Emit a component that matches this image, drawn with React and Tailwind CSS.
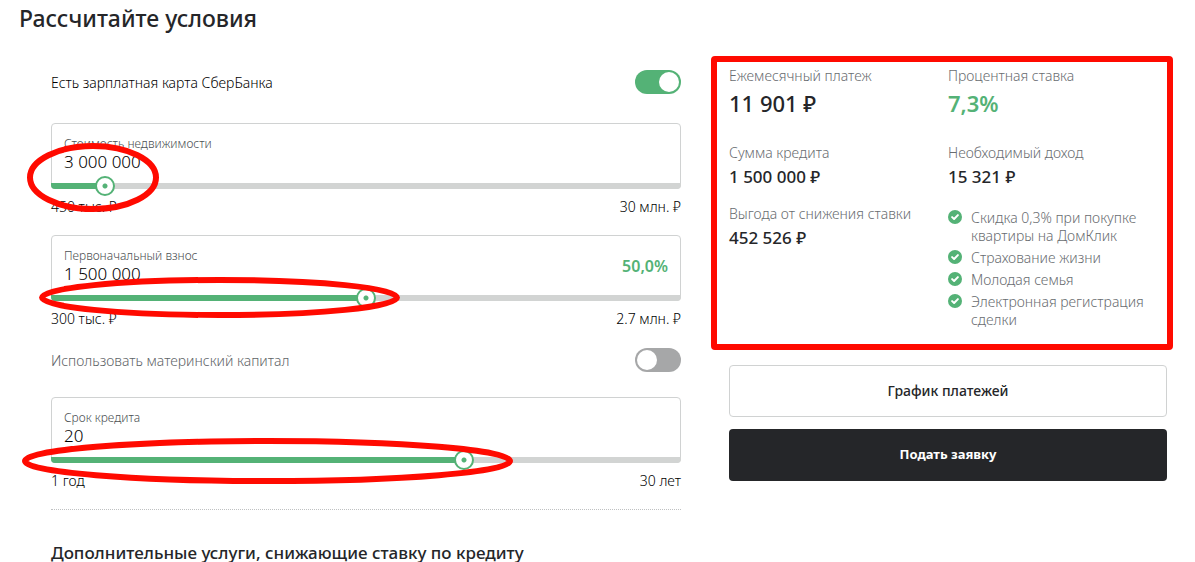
import React, { useState } from 'react';

const Switch = ({ id, label, defaultChecked, muted }) => (
    <div className="flex h-6 items-center justify-between">
        <label htmlFor={id} className={muted ? 'pt-0.5 text-sm font-light text-[#606467]' : 'pt-0.5 text-sm font-light text-black'}>
            {label}
        </label>
        <input
            id={id}
            type="checkbox"
            role="switch"
            defaultChecked={defaultChecked}
            className="h-6 w-[46px] shrink-0 cursor-pointer appearance-none rounded-full bg-[#a6a7a8] p-0.5 before:block before:size-5 before:rounded-full before:bg-white checked:bg-[#54b276] checked:before:ml-auto"
        />
    </div>
);

// Hand-drawn style red marker around a slider
const Marker = ({ className, width, height }) => (
    <svg
        className={`pointer-events-none absolute z-10 ${className}`}
        width={width}
        height={height}
        fill="none"
        aria-hidden="true"
    >
        <ellipse
            cx={width / 2}
            cy={height / 2}
            rx={width / 2 - 3}
            ry={height / 2 - 3}
            stroke="#ff0a00"
            strokeWidth="6"
        />
    </svg>
);

const RangeField = ({ id, label, display, min, max, step, initial, minLabel, maxLabel, percent, children }) => {
    const [value, setValue] = useState(initial);
    const [text, setText] = useState(display);
    const fill = ((value - min) / (max - min)) * 100;

    const handleSlide = (e) => {
        const next = Number(e.target.value);
        setValue(next);
        setText(next.toLocaleString('ru-RU'));
    };

    return (
        <div className="relative">
            <div className="relative h-[66px] rounded border border-[#d0d2d2]">
                <div className="flex items-center justify-between px-3 pt-3">
                    <div className="min-w-0 flex-1">
                        <label htmlFor={id} className="block text-xs leading-4 font-light text-[#4b4f52]">
                            {label}
                        </label>
                        <input
                            id={id}
                            type="text"
                            value={text}
                            onChange={(e) => setText(e.target.value)}
                            className="block h-5 w-full bg-transparent text-[17px] leading-5 font-light text-black outline-none"
                        />
                    </div>
                    {percent && <span className="text-base font-semibold text-[#54b276]">{percent}</span>}
                </div>
                <div className="absolute -inset-x-px -bottom-px h-1.5 overflow-hidden rounded-b bg-[#d2d4d3]">
                    <div className="h-full bg-[#54b276]" style={{ width: `${fill}%` }} />
                </div>
                <input
                    type="range"
                    aria-label={label}
                    min={min}
                    max={max}
                    step={step}
                    value={value}
                    onChange={handleSlide}
                    className="absolute -inset-x-[11px] -bottom-2 h-5 w-[calc(100%+22px)] cursor-pointer appearance-none bg-transparent [&::-webkit-slider-thumb]:size-5 [&::-webkit-slider-thumb]:appearance-none [&::-webkit-slider-thumb]:rounded-full [&::-webkit-slider-thumb]:border-2 [&::-webkit-slider-thumb]:border-[#54b276] [&::-webkit-slider-thumb]:bg-[radial-gradient(circle,#54b276_2px,#ffffff_3px)]"
                />
            </div>
            <div className="mt-2 flex h-5 items-center justify-between text-sm font-light text-black">
                <span>{minLabel}</span>
                <span>{maxLabel}</span>
            </div>
            {children}
        </div>
    );
};

const Stat = ({ label, value }) => (
    <div>
        <dt className="text-sm leading-5 font-light text-[#686c70]">{label}</dt>
        <dd className="mt-0.5 text-[17px] leading-6 font-medium">{value}</dd>
    </div>
);

const discounts = [
    'Скидка 0,3% при покупке квартиры на ДомКлик',
    'Страхование жизни',
    'Молодая семья',
    'Электронная регистрация сделки',
];

const CheckIcon = () => (
    <svg className="mt-px size-3.5 shrink-0" viewBox="0 0 14 14" fill="none" aria-hidden="true">
        <circle cx="7" cy="7" r="7" fill="#54b276" />
        <path d="M4.1 7.1 6.1 9 9.9 5.1" stroke="#fff" strokeWidth="2" strokeLinecap="round" strokeLinejoin="round" />
    </svg>
);

const App = () => {
    return (
        <main className="pr-7 pl-[19px] font-['Noto_Sans','Open_Sans',sans-serif] text-[#252629]">
            <h1 className="pt-1 text-[23px] leading-7 font-medium">Рассчитайте условия</h1>

            <div className="grid grid-cols-[630fr_438fr] gap-12 pt-[34px] pl-8">
                <form onSubmit={(e) => e.preventDefault()}>
                    <div className="pt-1">
                        <Switch id="salary-card" label="Есть зарплатная карта СберБанка" defaultChecked />
                    </div>

                    <div className="mt-[29px] space-y-[18px]">
                        <RangeField
                            id="price"
                            label="Стоимость недвижимости"
                            display="3 000 000"
                            min={450000}
                            max={30000000}
                            step={10000}
                            initial={3000000}
                            minLabel="450 тыс. ₽"
                            maxLabel="30 млн. ₽"
                        >
                            <Marker className="top-5 -left-6" width={132} height={69} />
                        </RangeField>
                        <RangeField
                            id="deposit"
                            label="Первоначальный взнос"
                            display="1 500 000"
                            min={300000}
                            max={2700000}
                            step={10000}
                            initial={1500000}
                            minLabel="300 тыс. ₽"
                            maxLabel="2.7 млн. ₽"
                            percent="50,0%"
                        >
                            <Marker className="top-[42px] -left-3" width={361} height={41} />
                        </RangeField>
                    </div>

                    <div className="mt-[19px]">
                        <Switch id="maternity" label="Использовать материнский капитал" muted />
                    </div>

                    <div className="mt-[25px]">
                        <RangeField
                            id="term"
                            label="Срок кредита"
                            display="20"
                            min={1}
                            max={30}
                            step={1}
                            initial={20}
                            minLabel="1 год"
                            maxLabel="30 лет"
                        >
                            <Marker className="top-[41px] -left-[29px]" width={491} height={46} />
                        </RangeField>
                    </div>

                    <hr className="mt-[18px] border-t border-dotted border-[#bfc1c2]" />
                    <h2 className="mt-[34px] text-[17px] leading-[18px] font-medium">
                        Дополнительные услуги, снижающие ставку по кредиту
                    </h2>
                </form>

                <aside>
                    <div className="relative grid grid-cols-2">
                        <dl>
                            <div>
                                <dt className="text-sm leading-5 font-light text-[#686c70]">Ежемесячный платеж</dt>
                                <dd className="text-[22px] leading-[34px] font-medium">11 901 ₽</dd>
                            </div>
                            <div className="mt-[23px] space-y-[15px]">
                                <Stat label="Сумма кредита" value="1 500 000 ₽" />
                                <Stat label="Выгода от снижения ставки" value="452 526 ₽" />
                            </div>
                        </dl>
                        <div>
                            <dl>
                                <div>
                                    <dt className="text-sm leading-5 font-light text-[#686c70]">Процентная ставка</dt>
                                    <dd className="text-[22px] leading-[34px] font-semibold text-[#54b276]">7,3%</dd>
                                </div>
                                <div className="mt-[23px]">
                                    <Stat label="Необходимый доход" value="15 321 ₽" />
                                </div>
                            </dl>
                            <ul className="mt-5 space-y-1 text-sm leading-[18px] font-light text-[#686c70]">
                                {discounts.map((item) => (
                                    <li key={item} className="flex gap-[9px] pr-4">
                                        <CheckIcon />
                                        <span>{item}</span>
                                    </li>
                                ))}
                            </ul>
                        </div>
                        <div className="pointer-events-none absolute -top-2.5 -right-1.5 -bottom-[21px] -left-[18px] rounded border-[6px] border-[#ff0a00]" />
                    </div>

                    <div className="mt-9 flex flex-col gap-3">
                        <button
                            type="button"
                            className="h-[52px] cursor-pointer rounded border border-[#d0d2d2] bg-white text-sm font-medium"
                        >
                            График платежей
                        </button>
                        <button
                            type="button"
                            className="h-[52px] cursor-pointer rounded bg-[#252629] text-[13px] font-bold text-white"
                        >
                            Подать заявку
                        </button>
                    </div>
                </aside>
            </div>
        </main>
    );
};

export default App;
